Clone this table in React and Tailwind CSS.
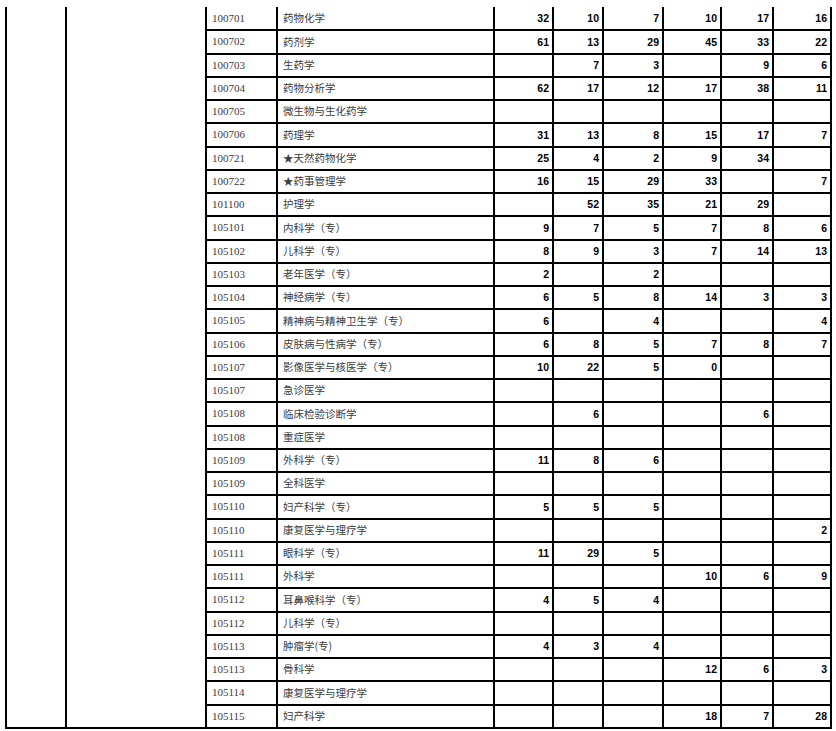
const rows = [
  ["100701", "药物化学", [32, 10, 7, 10, 17, 16]],
  ["100702", "药剂学", [61, 13, 29, 45, 33, 22]],
  ["100703", "生药学", ["", 7, 3, "", 9, 6]],
  ["100704", "药物分析学", [62, 17, 12, 17, 38, 11]],
  ["100705", "微生物与生化药学", []],
  ["100706", "药理学", [31, 13, 8, 15, 17, 7]],
  ["100721", "★天然药物化学", [25, 4, 2, 9, 34, ""]],
  ["100722", "★药事管理学", [16, 15, 29, 33, "", 7]],
  ["101100", "护理学", ["", 52, 35, 21, 29, ""]],
  ["105101", "内科学（专）", [9, 7, 5, 7, 8, 6]],
  ["105102", "儿科学（专）", [8, 9, 3, 7, 14, 13]],
  ["105103", "老年医学（专）", [2, "", 2]],
  ["105104", "神经病学（专）", [6, 5, 8, 14, 3, 3]],
  ["105105", "精神病与精神卫生学（专）", [6, "", 4, "", "", 4]],
  ["105106", "皮肤病与性病学（专）", [6, 8, 5, 7, 8, 7]],
  ["105107", "影像医学与核医学（专）", [10, 22, 5, 0]],
  ["105107", "急诊医学", []],
  ["105108", "临床检验诊断学", ["", 6, "", "", 6, ""]],
  ["105108", "重症医学", []],
  ["105109", "外科学（专）", [11, 8, 6]],
  ["105109", "全科医学", []],
  ["105110", "妇产科学（专）", [5, 5, 5]],
  ["105110", "康复医学与理疗学", ["", "", "", "", "", 2]],
  ["105111", "眼科学（专）", [11, 29, 5]],
  ["105111", "外科学", ["", "", "", 10, 6, 9]],
  ["105112", "耳鼻喉科学（专）", [4, 5, 4]],
  ["105112", "儿科学（专）", []],
  ["105113", "肿瘤学(专)", [4, 3, 4]],
  ["105113", "骨科学", ["", "", "", 12, 6, 3]],
  ["105114", "康复医学与理疗学", []],
  ["105115", "妇产科学", ["", "", "", 18, 7, 28]],
]

const cols = [60, 140, 71, 217, 59, 50, 60, 58, 52, 58]

export default function App() {
  return (
    <div className="min-h-screen bg-white pt-[7px] pl-[5px]">
      <table
        className="border-collapse table-fixed w-[825px]"
        style={{ fontFamily: '"Liberation Serif", "Noto Sans CJK SC", serif' }}
      >
        <colgroup>
          {cols.map((w, i) => (
            <col key={i} style={{ width: w }} />
          ))}
        </colgroup>
        <tbody>
          {rows.map(([code, name, nums], i) => (
            <tr key={i} className="h-[23.25px]">
              {i === 0 && (
                <>
                  <td rowSpan={rows.length} className="border-2 border-t-0 border-black"></td>
                  <td rowSpan={rows.length} className="border-2 border-t-0 border-black"></td>
                </>
              )}
              <td
                className={`border-2 border-black px-[5px] text-[11px] text-[#3c3c3c] leading-none ${
                  i === 0 ? "border-t-0" : ""
                }`}
              >
                {code}
              </td>
              <td
                className={`border-2 border-black px-[5px] text-[10.5px] text-[#3c3c3c] leading-none whitespace-nowrap ${
                  i === 0 ? "border-t-0" : ""
                }`}
                style={{ fontFamily: '"Noto Sans CJK SC", sans-serif' }}
              >
                {name}
              </td>
              {[0, 1, 2, 3, 4, 5].map((j) => (
                <td
                  key={j}
                  className={`border-2 border-black pr-[3px] text-right text-[10.5px] font-bold text-black leading-none ${
                    i === 0 ? "border-t-0" : ""
                  }`}
                  style={{ fontFamily: '"Liberation Sans", Arial, sans-serif' }}
                >
                  {nums[j] ?? ""}
                </td>
              ))}
            </tr>
          ))}
        </tbody>
      </table>
    </div>
  )
}
